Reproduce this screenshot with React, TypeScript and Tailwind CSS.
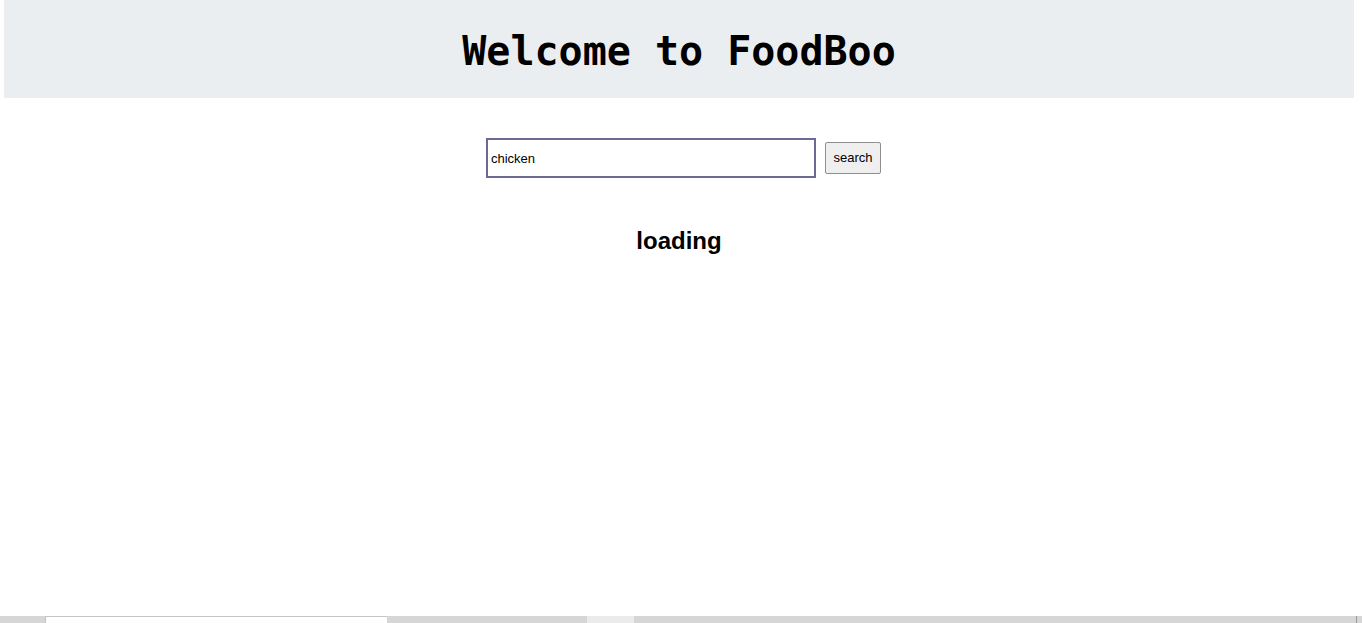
import React from "react";

export default function App() {
  return (
    <div className="relative h-[623px] w-[1362px] overflow-hidden bg-white" style={{ fontFamily: '"Liberation Sans", Arial, sans-serif' }}>
      <div className="mx-[4px] flex h-[98px] w-[1350px] items-center justify-center bg-[#ebeef1]">
        <h1 className="pt-[4px] text-[40px] font-bold leading-none text-black" style={{ fontFamily: '"DejaVu Sans Mono", "Liberation Mono", monospace' }}>
          Welcome to FoodBoo
        </h1>
      </div>
      <div className="mt-[40px] flex items-center justify-center">
        <input
          defaultValue="chicken"
          className="ml-[5px] h-[40px] w-[330px] border-2 border-[#6b6a94] px-[3px] text-[13px] text-black outline-none"
          style={{ fontFamily: '"Liberation Sans", Arial, sans-serif' }}
        />
        <button className="ml-[9px] h-[32px] w-[56px] rounded-[2px] border border-[#8f8f8f] bg-[#efefef] text-[13px] text-black">
          search
        </button>
      </div>
      <div className="mt-[51px] flex justify-center">
        <h2 className="mr-[4px] text-[24px] font-bold leading-none text-black">loading</h2>
      </div>
      <div className="absolute bottom-0 left-0 flex h-[7px] w-[1362px] bg-[#d6d6d6]">
        <div className="ml-[45px] h-[7px] w-[342px] border-l border-t border-[#c4c4c4] bg-white" />
        <div className="ml-[200px] h-[7px] w-[47px] bg-[#ebebeb]" />
        <div className="ml-auto mr-[5px] h-[7px] w-px bg-[#9a9a9a]" />
      </div>
    </div>
  );
}
